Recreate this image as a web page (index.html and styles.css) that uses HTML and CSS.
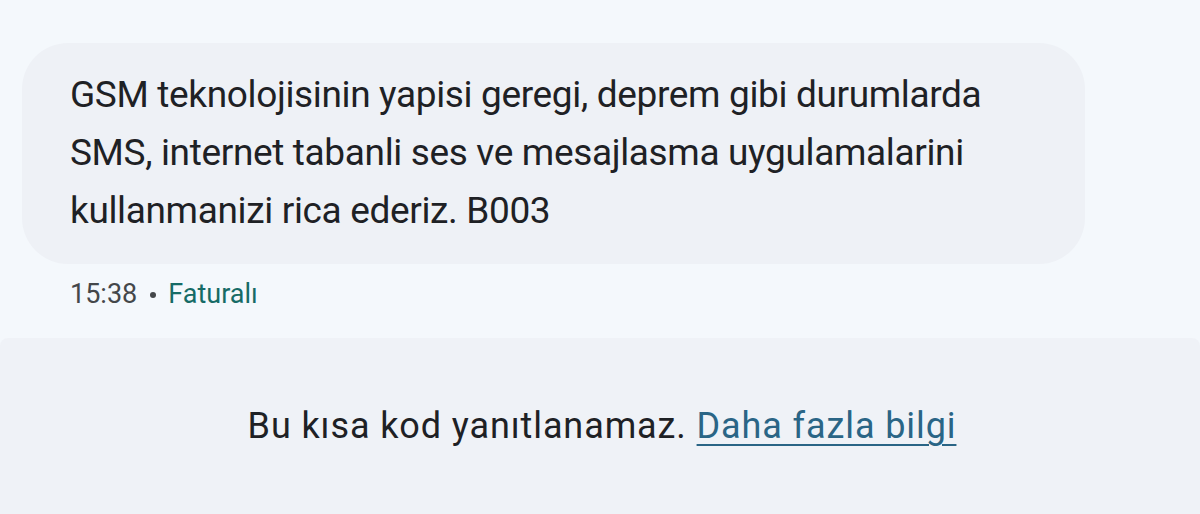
FILE: index.html
```html
<!DOCTYPE html>
<html>
<head>
<title>Mesaj</title>
<meta charset="utf-8">
<link rel="stylesheet" href="styles.css">
</head>
<body>

<div class="thread">
 <div class="bubble">GSM teknolojisinin yapisi geregi, deprem gibi durumlarda SMS, internet tabanli ses ve mesajlasma uygulamalarini kullanmanizi rica ederiz. B003</div>
 <div class="meta"><span class="time">15:38</span><span class="dot"></span><span class="sim">Faturalı</span></div>
</div>

<div class="footer">
 <p>Bu kısa kod yanıtlanamaz. <a href="#">Daha fazla bilgi</a></p>
</div>

</body>
</html>
```

FILE: styles.css
```css
html, body {
 margin: 0;
 padding: 0;
 height: 100%;
}
body {
 background-color: #f4f8fc;
 font-family: Roboto, "Noto Sans", sans-serif;
 color: #1e2125;
 overflow: hidden;
}
.thread {
 padding: 43px 0 0 22px;
 height: 295px;
 box-sizing: border-box;
}
.bubble {
 background-color: #eef1f6;
 border-radius: 46px;
 width: 1063px;
 box-sizing: border-box;
 padding: 23px 40px 0 48px;
 height: 221px;
 font-size: 37px;
 line-height: 58px;
 letter-spacing: -0.35px;
}
.meta {
 padding: 14px 0 0 48px;
 font-size: 27px;
 color: #44474a;
 display: flex;
 align-items: center;
}
.meta .dot {
 width: 6px;
 height: 6px;
 border-radius: 50%;
 background-color: #44474a;
 margin: 2px 12px 0 13px;
}
.meta .sim {
 color: #166b66;
}
.footer {
 background-color: #eff2f7;
 border-radius: 8px 8px 0 0;
 height: 176px;
 margin-top: 43px;
 display: flex;
 align-items: center;
 justify-content: center;
}
.footer p {
 margin: 0;
 font-size: 36px;
 letter-spacing: 0.9px;
 padding-left: 4px;
}
.footer a {
 color: #2a6586;
 text-decoration-thickness: 2px;
 text-underline-offset: 6px;
}
```
